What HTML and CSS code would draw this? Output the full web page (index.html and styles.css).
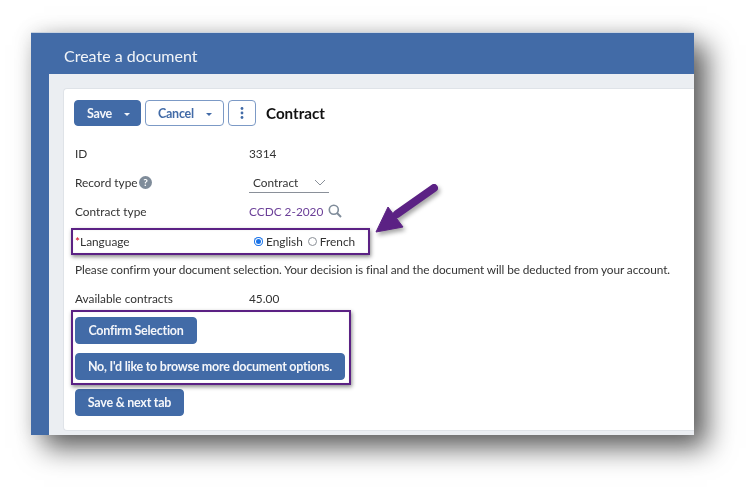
FILE: index.html
```html
<!DOCTYPE html>
<html lang="en">
<head>
<meta charset="utf-8">
<title>Create a document</title>
<link rel="stylesheet" href="styles.css">
</head>
<body>
<main class="window">
  <header class="window-title">Create a document</header>
  <div class="panel">
    <section class="card">
      <div class="toolbar">
        <button class="btn btn-solid btn-save">Save<span class="caret"></span></button>
        <button class="btn btn-outline btn-cancel">Cancel<span class="caret"></span></button>
        <button class="btn btn-outline btn-more" aria-label="More">
          <svg width="4" height="12" viewBox="0 0 4 12"><circle cx="2" cy="1.5" r="1.4"/><circle cx="2" cy="6" r="1.4"/><circle cx="2" cy="10.5" r="1.4"/></svg>
        </button>
        <h1 class="record-title">Contract</h1>
      </div>
      <div class="row row-id"><span class="label">ID</span><span class="value">3314</span></div>
      <div class="row row-type">
        <span class="label">Record type<svg class="help" width="13" height="13" viewBox="0 0 13 13"><circle cx="6.5" cy="6.5" r="6.5" fill="#7f8c9a"/><text x="6.5" y="10" text-anchor="middle" class="help-mark">?</text></svg></span>
        <span class="select">Contract<svg width="12" height="7" viewBox="0 0 12 7"><path d="M1 1l5 5 5-5" fill="none" stroke="#8a9099" stroke-width="1"/></svg></span>
      </div>
      <div class="row row-contract">
        <span class="label">Contract type</span>
        <span class="value link">CCDC 2-2020<svg class="search" width="14" height="14" viewBox="0 0 14 14"><circle cx="5.8" cy="5.8" r="4.5" fill="none" stroke="#7f8c9a" stroke-width="1.6"/><path d="M9 9l4 4" stroke="#7f8c9a" stroke-width="2"/></svg></span>
      </div>
      <div class="row row-language">
        <span class="label"><span class="required">*</span>Language</span>
        <span class="radios">
          <span class="radio radio-on"></span><span>English</span>
          <span class="radio radio-off"></span><span>French</span>
        </span>
      </div>
      <p class="notice">Please confirm your document selection. Your decision is final and the document will be deducted from your account.</p>
      <div class="row row-available"><span class="label">Available contracts</span><span class="value">45.00</span></div>
      <div class="actions">
        <button class="btn btn-solid btn-action btn-confirm">Confirm Selection</button>
        <button class="btn btn-solid btn-action btn-browse">No, I'd like to browse more document options.</button>
        <button class="btn btn-solid btn-action btn-next">Save &amp; next tab</button>
      </div>
    </section>
  </div>
  <div class="callout callout-language"></div>
  <div class="callout callout-actions"></div>
  <svg class="arrow" width="70" height="54" viewBox="0 0 70 54">
    <path d="M61 5L24 31" fill="none" stroke="#5b2184" stroke-width="8" stroke-linecap="round"/>
    <path d="M3 49L15 24 30 44Z" fill="#5b2184" stroke="#5b2184" stroke-linejoin="round"/>
  </svg>
</main>
</body>
</html>
```
FILE: styles.css
```css
* { box-sizing: border-box; }
html, body { margin: 0; background: #fff; }
body {
  padding: 32px 0 0 31px;
  height: 497px;
  overflow: hidden;
  font-family: Lato, "Liberation Sans", sans-serif;
  font-size: 11.85px;
  color: #333;
}
.window {
  position: relative;
  width: 663px;
  height: 403px;
  background: #426ba7;
  display: flex;
  flex-direction: column;
  box-shadow: 13px 13px 26px rgba(0,0,0,.62), 0 0 18px rgba(0,0,0,.1);
  border-top: 1px solid #c9d3e0;
}
.window-title {
  height: 41px;
  flex: none;
  padding: 13px 0 0 33px;
  font-size: 16px;
  line-height: 20px;
  color: #f1f4f8;
  filter: blur(.3px);
}
.panel {
  flex: 1;
  margin-left: 18px;
  background: #ebeef2;
  padding: 14px 0 4px 14px;
  display: flex;
  min-height: 0;
}
.card {
  flex: 1;
  background: #fff;
  border: 1px solid #dfe3e8;
  border-right: 0;
  border-radius: 4px 0 0 4px;
  padding: 11px 0 0 10px;
  filter: blur(.3px);
}
.toolbar {
  display: flex;
  align-items: center;
  gap: 4px;
  height: 26px;
}
.btn {
  font-family: inherit;
  font-weight: 700;
  font-size: 12.5px;
  letter-spacing: -.25px;
  border-radius: 4px;
  height: 27px;
  padding: 0;
  display: inline-flex;
  align-items: center;
}
.toolbar .btn { height: 26px; }
.btn-solid { background: #426ba7; color: #f4f6fa; border: 1px solid #426ba7; }
.btn-outline { background: #fff; color: #426ba7; border: 1px solid #7c9ac6; }
.btn-save { width: 67px; padding-left: 12px; }
.btn-cancel { width: 79px; padding-left: 12px; }
.btn-more { width: 28px; justify-content: center; }
.btn-more svg { fill: #426ba7; }
.caret {
  border: 3px solid transparent;
  border-top-color: currentColor;
  border-bottom: 0;
  margin-left: 12px;
  margin-top: 2px;
}
.record-title {
  margin: 0 0 0 6px;
  font-size: 15.2px;
  font-weight: 700;
  color: #111;
}
.row {
  display: flex;
  align-items: center;
  padding-left: 1px;
  height: 28px;
}
.label { width: 174px; flex: none; display: flex; align-items: center; }
.row-id { margin-top: 13px; }
.row-type { height: 28px; margin-top: 1px; }
.row-contract { height: 28px; margin-top: 1px; }
.row-language { margin-top: 2px; }
.help { margin-left: 1px; }
.help-mark { font-size: 10px; font-weight: 700; fill: #fff; font-family: Lato, sans-serif; }
.select {
  width: 80px;
  height: 21px;
  padding-left: 4px;
  padding-right: 3px;
  margin-top: 1px;
  border-bottom: 1px solid #8a9099;
  display: flex;
  align-items: center;
  justify-content: space-between;
}
.link { color: #6b3f98; display: flex; align-items: center; gap: 5px; }
.required { color: #d0021b; }
.radios { display: flex; align-items: center; margin-left: 5px; }
.radio {
  width: 9px;
  height: 9px;
  border-radius: 50%;
  margin-right: 3px;
  background: #fff;
}
.radio-on { box-shadow: inset 0 0 0 1px #1a73e8, inset 0 0 0 2px #fff; background: #1a73e8; }
.radio-off { border: 1px solid #8a8f96; margin-left: 5px; }
.notice { margin: 1px 0 0; padding-left: 1px; height: 28px; line-height: 28px; white-space: nowrap; letter-spacing: -.085px; }
.row-available { margin-top: 0; }
.actions {
  display: flex;
  flex-direction: column;
  align-items: flex-start;
  gap: 9px;
  margin: 5px 0 0 1px;
}
.btn-action { justify-content: center; }
.btn-confirm { width: 122px; }
.btn-browse { width: 270px; }
.btn-next { width: 109px; }
.callout {
  position: absolute;
  border: 2px solid #5b2184;
  box-shadow: 1px 2px 4px rgba(0,0,0,.45), inset 0 0 2px rgba(0,0,0,.1);
}
.callout-language { left: 40px; top: 195px; width: 299px; height: 27px; }
.callout-actions { left: 40px; top: 277px; width: 280px; height: 75px; }
.arrow {
  position: absolute;
  left: 342px;
  top: 150px;
  filter: drop-shadow(2px 3px 2px rgba(0,0,0,.35));
}
```
